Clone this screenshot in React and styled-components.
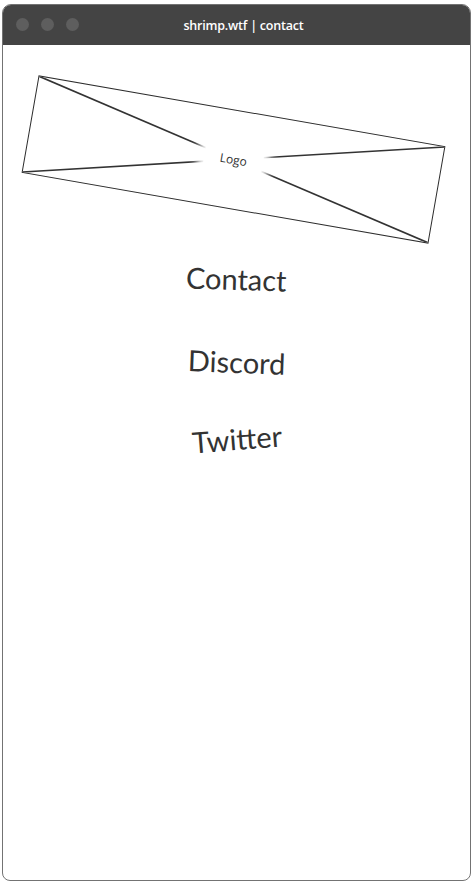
import React from 'react';
import styled, { createGlobalStyle } from 'styled-components';

const GlobalStyle = createGlobalStyle`
  html, body {
    margin: 0;
    padding: 0;
    background: #ffffff;
  }
  body {
    font-family: Lato, "Open Sans", "Liberation Sans", sans-serif;
  }
`;

const Window = styled.div`
  box-sizing: border-box;
  margin: 4px 0 0 2px;
  width: 469px;
  height: 877px;
  border: 1.5px solid #737373;
  border-radius: 9px 9px 8px 8px;
  overflow: hidden;
  background: #ffffff;
  display: flex;
  flex-direction: column;
`;

const TitleBar = styled.div`
  position: relative;
  height: 40px;
  background: #444444;
  display: flex;
  align-items: center;
  justify-content: center;
  flex-shrink: 0;
`;

const Dots = styled.div`
  position: absolute;
  left: 13px;
  top: 13px;
  display: flex;
  gap: 12px;
`;

const Dot = styled.span`
  width: 13px;
  height: 13px;
  border-radius: 50%;
  background: #5e5e5e;
`;

const Title = styled.div`
  margin-left: 14px;
  color: #ffffff;
  font-family: "Open Sans", "Liberation Sans", sans-serif;
  font-size: 12.5px;
  font-weight: 600;
  letter-spacing: -0.2px;
`;

const Content = styled.div`
  display: flex;
  flex-direction: column;
  align-items: center;
  padding-top: 65px;
`;

const LogoBox = styled.div`
  position: relative;
  box-sizing: border-box;
  width: 413px;
  height: 99px;
  margin-right: 7px;
  border: 1.7px solid #2e2e2e;
  transform: rotate(9.9deg);
  display: flex;
  align-items: center;
  justify-content: center;
`;

const Cross = styled.svg`
  position: absolute;
  inset: 0;
  width: 100%;
  height: 100%;
`;

const LogoLabel = styled.span`
  position: relative;
  padding: 4px 16px;
  background: #ffffff;
  box-shadow: 0 0 8px 6px #ffffff;
  color: #333333;
  font-family: "Open Sans", "Liberation Sans", sans-serif;
  font-size: 12px;
`;

const NavList = styled.nav`
  display: flex;
  flex-direction: column;
  align-items: center;
  margin-top: 51px;
`;

const NavLink = styled.a`
  display: block;
  height: 38px;
  margin-top: ${p => p.$space}px;
  line-height: 38px;
  color: #333333;
  font-family: Lato, "Open Sans", sans-serif;
  font-size: 29px;
  text-decoration: none;
  transform: rotate(${p => p.$tilt}deg);
`;

const links = [
  { label: 'Contact', tilt: 1.8, space: 0 },
  { label: 'Discord', tilt: 2.2, space: 45 },
  { label: 'Twitter', tilt: -4.6, space: 39 },
];

export default function App() {
  return (
    <>
      <GlobalStyle />
      <Window>
        <TitleBar>
          <Dots>
            <Dot />
            <Dot />
            <Dot />
          </Dots>
          <Title>shrimp.wtf | contact</Title>
        </TitleBar>
        <Content>
          <LogoBox>
            <Cross viewBox="0 0 410 96" preserveAspectRatio="none">
              <line x1="0" y1="0" x2="410" y2="96" stroke="#333" strokeWidth="1.6" />
              <line x1="0" y1="96" x2="410" y2="0" stroke="#333" strokeWidth="1.6" />
            </Cross>
            <LogoLabel>Logo</LogoLabel>
          </LogoBox>
          <NavList>
            {links.map(link => (
              <NavLink key={link.label} href="#" $tilt={link.tilt} $space={link.space}>
                {link.label}
              </NavLink>
            ))}
          </NavList>
        </Content>
      </Window>
    </>
  );
}
